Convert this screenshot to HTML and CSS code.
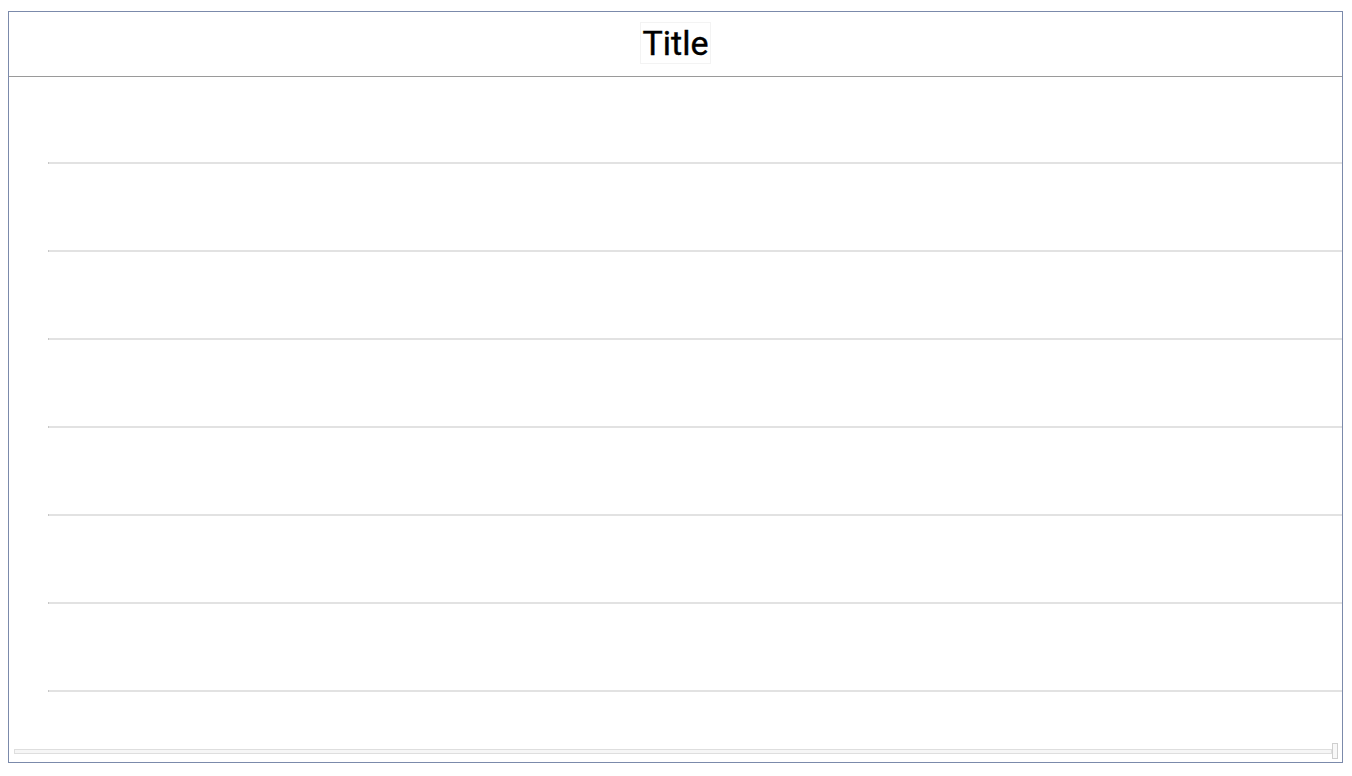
FILE: index.html
```html
<!DOCTYPE html>
<html>
<head>
<meta charset="utf-8">
<link rel="stylesheet" href="styles.css">
</head>
<body>
<div class="frame">
  <div class="header"><span class="title">Title</span></div>
  <div class="plot">
    <div class="grid">
      <div class="line"></div>
      <div class="line"></div>
      <div class="line"></div>
      <div class="line"></div>
      <div class="line"></div>
      <div class="line"></div>
      <div class="line"></div>
    </div>
    <div class="scroll">
      <div class="track"></div>
      <div class="handle"></div>
    </div>
  </div>
</div>
</body>
</html>
```
FILE: styles.css
```css
html, body { background: #fff; }
body { margin: 8px; font-family: Roboto, "Liberation Sans", sans-serif; }
.frame {
  margin-top: 3px;
  height: 750px;
  border: 1px solid #7b8aab;
  display: flex;
  flex-direction: column;
  box-sizing: content-box;
  width: 1333px;
}
.header {
  height: 64px;
  border-bottom: 1px solid #9a9a9a;
  display: flex;
  justify-content: center;
  align-items: flex-start;
}
.title {
  margin-top: 10px;
  font-size: 34px;
  font-weight: 400;
  line-height: 40px;
  padding: 0 2px;
  border: 1px solid #f3f3f3;
  color: #000;
  -webkit-text-stroke: 0.4px #000;
}
.plot {
  flex: 1;
  display: flex;
  flex-direction: column;
}
.grid {
  padding-top: 85px;
  padding-left: 39px;
  display: flex;
  flex-direction: column;
  gap: 86px;
}
.line {
  height: 2px;
  background: #e2e2e2;
  border-left: 1px solid #c8c8c8;
}
.scroll {
  margin-top: 51px;
  display: flex;
  align-items: center;
  padding-left: 5px;
}
.track {
  width: 1316px;
  height: 3px;
  border: 1px solid #dedede;
  background: #f6f6f6;
}
.handle {
  width: 4px;
  height: 14px;
  border: 1px solid #cfcfcf;
  background: #f8f8f8;
}
```
